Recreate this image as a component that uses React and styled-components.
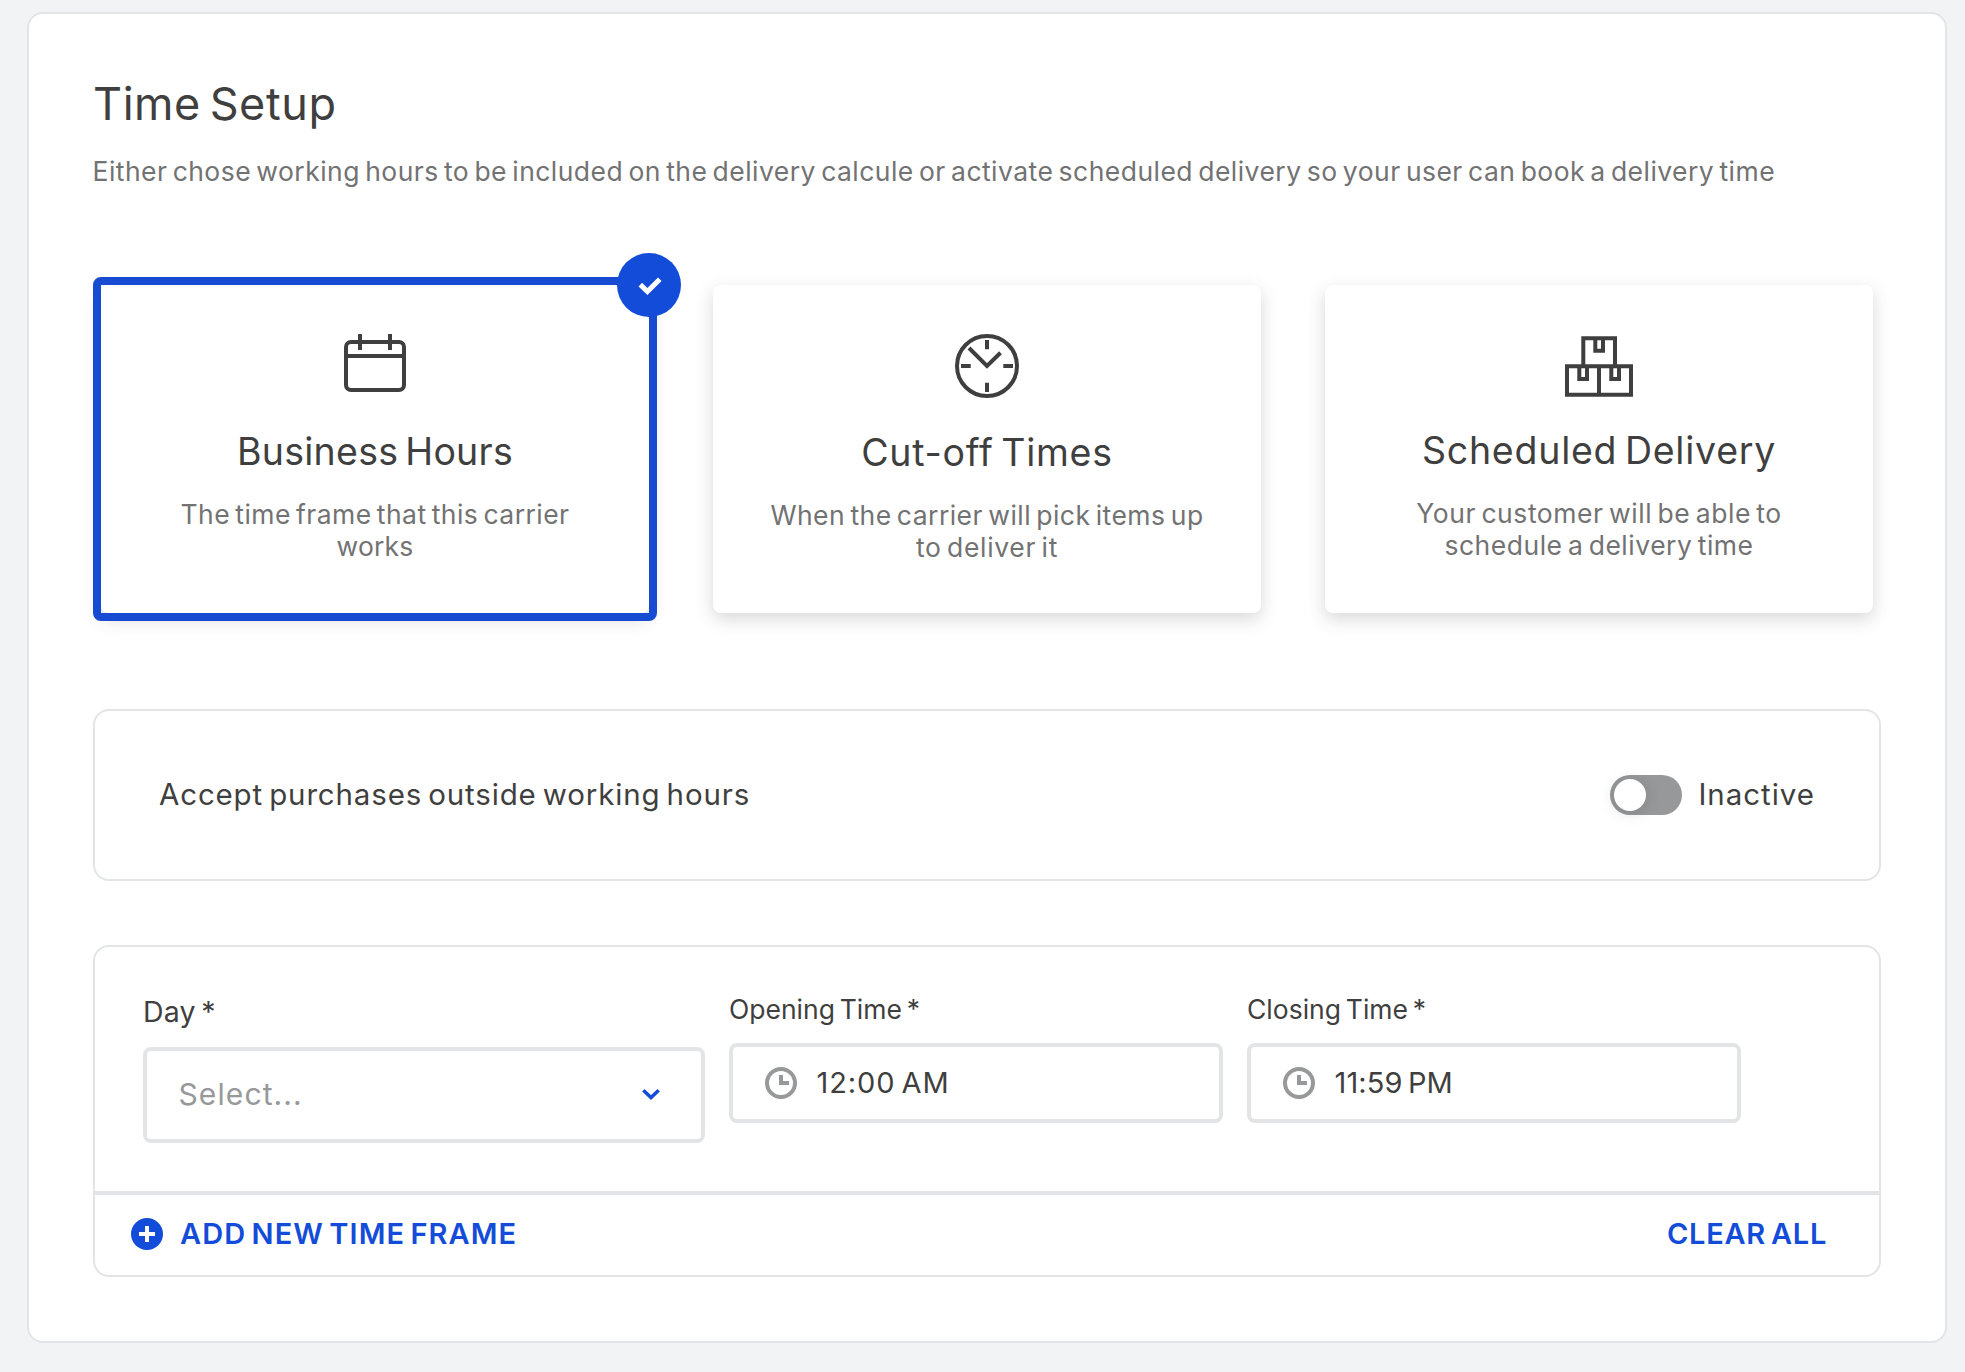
import React, { useState } from 'react';
import styled, { createGlobalStyle } from 'styled-components';

const color = {
  page: '#f2f3f5',
  border: '#e3e4e6',
  text: '#3f3f40',
  muted: '#727273',
  placeholder: '#979899',
  action: '#134cd8',
};

const GlobalStyle = createGlobalStyle`
  *, *::before, *::after { box-sizing: border-box; }
  body {
    margin: 0;
    background: ${color.page};
    color: ${color.text};
    font-family: Inter, "Liberation Sans", sans-serif;
  }
  svg { display: block; flex: none; }
  button { font-family: inherit; cursor: pointer; }
`;

const Page = styled.main`
  min-height: 1372px;
  padding: 12px 18px 29px 27px;
`;

const Panel = styled.section`
  width: 1920px;
  height: 1331px;
  padding: 64px;
  background: #fff;
  border: 2px solid ${color.border};
  border-radius: 16px;
`;

const Title = styled.h1`
  margin: 0;
  font-size: 45px;
  font-weight: 400;
  line-height: 52px;
  letter-spacing: 0.58px;
  word-spacing: -0.1em;
`;

const Subtitle = styled.p`
  margin: 26px 0 0 -0.5px;
  color: ${color.muted};
  font-size: 26.5px;
  line-height: 31px;
  letter-spacing: 0.46px;
  word-spacing: -0.1em;
  white-space: nowrap;
`;

const OptionGrid = styled.div`
  display: grid;
  grid-template-columns: repeat(3, 548px);
  gap: 64px;
  margin: 98px 8px 96px;
`;

const OptionCard = styled.article`
  position: relative;
  display: flex;
  flex-direction: column;
  align-items: center;
  height: 328px;
  padding-top: 48px;
  background: #fff;
  border-radius: 8px;
  box-shadow: 0 6px 18px rgba(61, 62, 64, 0.2);

  &::after {
    content: '';
    display: ${(p) => (p.$selected ? 'block' : 'none')};
    position: absolute;
    inset: -8px;
    border: 8px solid #174bd2;
    border-radius: 8px;
  }
`;

const Badge = styled.span`
  position: absolute;
  z-index: 1;
  top: -32px;
  right: -32px;
  width: 64px;
  height: 64px;
  border-radius: 50%;
  background: ${color.action};
`;

const OptionTitle = styled.h2`
  margin: 32px 0 24px;
  font-size: 37.5px;
  font-weight: 400;
  line-height: 44px;
  letter-spacing: ${(p) => p.$track}px;
  word-spacing: -0.1em;
`;

const OptionLine = styled.span`
  color: ${color.muted};
  font-size: 26.5px;
  line-height: 32px;
  letter-spacing: ${(p) => p.$track}px;
  word-spacing: -0.1em;
  white-space: nowrap;
`;

const Box = styled.section`
  border: 2px solid ${color.border};
  border-radius: 16px;
`;

const ToggleBox = styled(Box)`
  display: flex;
  align-items: center;
  justify-content: space-between;
  height: 172px;
  padding: 0 64px;
  margin-bottom: 64px;
`;

const Label = styled.span`
  padding-bottom: 2px;
  font-size: ${(p) => p.$size || 29}px;
  line-height: 34px;
  letter-spacing: ${(p) => p.$track}px;
  word-spacing: -0.1em;
  white-space: nowrap;
`;

const SwitchGroup = styled.div`
  display: flex;
  align-items: center;
  gap: 16px;
`;

const Switch = styled.button`
  display: flex;
  justify-content: ${(p) => (p.$on ? 'flex-end' : 'flex-start')};
  width: 72px;
  height: 40px;
  padding: 4px;
  border: 0;
  border-radius: 20px;
  background: ${(p) => (p.$on ? color.action : color.placeholder)};
`;

const Knob = styled.span`
  width: 32px;
  height: 32px;
  border-radius: 50%;
  background: #fff;
  box-shadow: 0 2px 16px rgba(0, 0, 0, 0.14);
`;

const Fields = styled.div`
  display: grid;
  grid-template-columns: 562px 494px 494px;
  align-items: start;
  gap: 24px;
  padding: 48px;
`;

const Field = styled.div`
  display: flex;
  flex-direction: column;
  gap: ${(p) => p.$gap}px;
`;

const TimeLabel = styled(Label)`
  font-size: 26.5px;
  line-height: 28px;
`;

const TimeValue = styled(Label)`
  padding-bottom: 0;
  line-height: 36px;
`;

const Control = styled.div`
  display: flex;
  align-items: center;
  border: 4px solid ${color.border};
  border-radius: 8px;
`;

const Select = styled(Control)`
  justify-content: space-between;
  height: 96px;
  padding: 0 41px 0 31.5px;
`;

const Placeholder = styled(Label)`
  color: ${color.placeholder};
`;

const TimeInput = styled(Control)`
  gap: 19.5px;
  height: 80px;
  padding-left: 32px;
`;

const Footer = styled.footer`
  display: flex;
  align-items: center;
  justify-content: space-between;
  height: 84px;
  padding: 0 52px 2px 36px;
  border-top: 4px solid ${color.border};
`;

const TextButton = styled.button`
  display: flex;
  align-items: center;
  gap: 17px;
  padding: 0;
  border: 0;
  background: none;
  color: ${color.action};
  font-size: 29px;
  font-weight: 600;
  line-height: 36px;
  letter-spacing: ${(p) => p.$track}px;
  word-spacing: -0.1em;
`;

const CalendarIcon = () => (
  <svg width="62" height="65" viewBox="0 0 62 65" fill="none" stroke={color.text} strokeWidth="4">
    <rect x="2" y="9" width="58" height="48" rx="5" />
    <path d="M2 23H60M16 1V17M46 1V17" />
  </svg>
);

const CutOffIcon = () => (
  <svg width="64" height="66" viewBox="0 0 64 66" fill="none" stroke={color.text} strokeWidth="4">
    <circle cx="32" cy="33" r="30" />
    <path d="M32 7V16.3M32 49.7V59M6 33H15.7M48.3 33H58M14 15L32 33L45.5 19.8" />
  </svg>
);

const BoxesIcon = () => (
  <svg width="68" height="64" viewBox="0 0 68 64" fill="none" stroke={color.text} strokeWidth="4">
    <path d="M2 33.3H66V61.7H2ZM34 33.3V61.7M18.3 33.3V5.3H50V33.3" />
    <path d="M14.3 33.3V46H22V33.3M46.3 33.3V46H54V33.3M30.3 5.3V17.7H38V5.3" />
  </svg>
);

const CheckIcon = () => (
  <svg width="64" height="64" viewBox="0 0 64 64" fill="none" stroke="#fff" strokeWidth="5">
    <path d="M23.3 31.6L30.4 38.6L42.8 26.2" />
  </svg>
);

const ClockIcon = () => (
  <svg width="32" height="32" viewBox="0 0 32 32" fill="none" stroke={color.placeholder} strokeWidth="4">
    <circle cx="16" cy="16" r="14" />
    <path d="M16 8V16H24" />
  </svg>
);

const ChevronIcon = () => (
  <svg width="18" height="20" viewBox="0 0 18 20" fill="none" stroke={color.action} strokeWidth="3.4">
    <path d="M1.3 5.2L9 12.6L16.7 5.2" />
  </svg>
);

const PlusIcon = () => (
  <svg width="32" height="32" viewBox="0 0 32 32">
    <circle cx="16" cy="16" r="16" fill={color.action} />
    <path d="M16 8V24M8 16H24" stroke="#fff" strokeWidth="4" />
  </svg>
);

const options = [
  {
    title: 'Business Hours',
    track: 0.25,
    Icon: CalendarIcon,
    lines: [['The time frame that this carrier', 0.44], ['works', 0.2]],
  },
  {
    title: 'Cut-off Times',
    track: 0.76,
    Icon: CutOffIcon,
    lines: [['When the carrier will pick items up', 0.46], ['to deliver it', 0.68]],
  },
  {
    title: 'Scheduled Delivery',
    track: 0.76,
    Icon: BoxesIcon,
    lines: [['Your customer will be able to', 0.56], ['schedule a delivery time', 0.52]],
  },
];

const times = [
  { label: 'Opening Time *', labelTrack: 0, value: '12:00 AM', track: 0.9 },
  { label: 'Closing Time *', labelTrack: 0, value: '11:59 PM', track: 0.1 },
];

export default function App() {
  const [selected, setSelected] = useState(0);
  const [accepts, setAccepts] = useState(false);

  return (
    <Page>
      <GlobalStyle />
      <Panel>
        <Title>Time Setup</Title>
        <Subtitle>
          Either chose working hours to be included on the delivery calcule or activate scheduled
          delivery so your user can book a delivery time
        </Subtitle>

        <OptionGrid>
          {options.map(({ title, track, Icon, lines }, i) => (
            <OptionCard key={title} $selected={i === selected} onClick={() => setSelected(i)}>
              {i === selected && <Badge><CheckIcon /></Badge>}
              <Icon />
              <OptionTitle $track={track}>{title}</OptionTitle>
              {lines.map(([text, lineTrack]) => (
                <OptionLine key={text} $track={lineTrack}>{text}</OptionLine>
              ))}
            </OptionCard>
          ))}
        </OptionGrid>

        <ToggleBox>
          <Label $size={29.5} $track={0.84}>Accept purchases outside working hours</Label>
          <SwitchGroup>
            <Switch $on={accepts} aria-label="Accept purchases" onClick={() => setAccepts(!accepts)}>
              <Knob />
            </Switch>
            <Label $size={29.5} $track={0.98}>{accepts ? 'Active' : 'Inactive'}</Label>
          </SwitchGroup>
        </ToggleBox>

        <Box>
          <Fields>
            <Field $gap={16}>
              <Label $size={28.5} $track={0.2}>Day *</Label>
              <Select>
                <Placeholder $size={30} $track={1.1}>Select...</Placeholder>
                <ChevronIcon />
              </Select>
            </Field>
            {times.map(({ label, labelTrack, value, track }) => (
              <Field key={label} $gap={18}>
                <TimeLabel $track={labelTrack}>{label}</TimeLabel>
                <TimeInput>
                  <ClockIcon />
                  <TimeValue $track={track}>{value}</TimeValue>
                </TimeInput>
              </Field>
            ))}
          </Fields>
          <Footer>
            <TextButton $track={1.05}>
              <PlusIcon />
              ADD NEW TIME FRAME
            </TextButton>
            <TextButton $track={0.7}>CLEAR ALL</TextButton>
          </Footer>
        </Box>
      </Panel>
    </Page>
  );
}
